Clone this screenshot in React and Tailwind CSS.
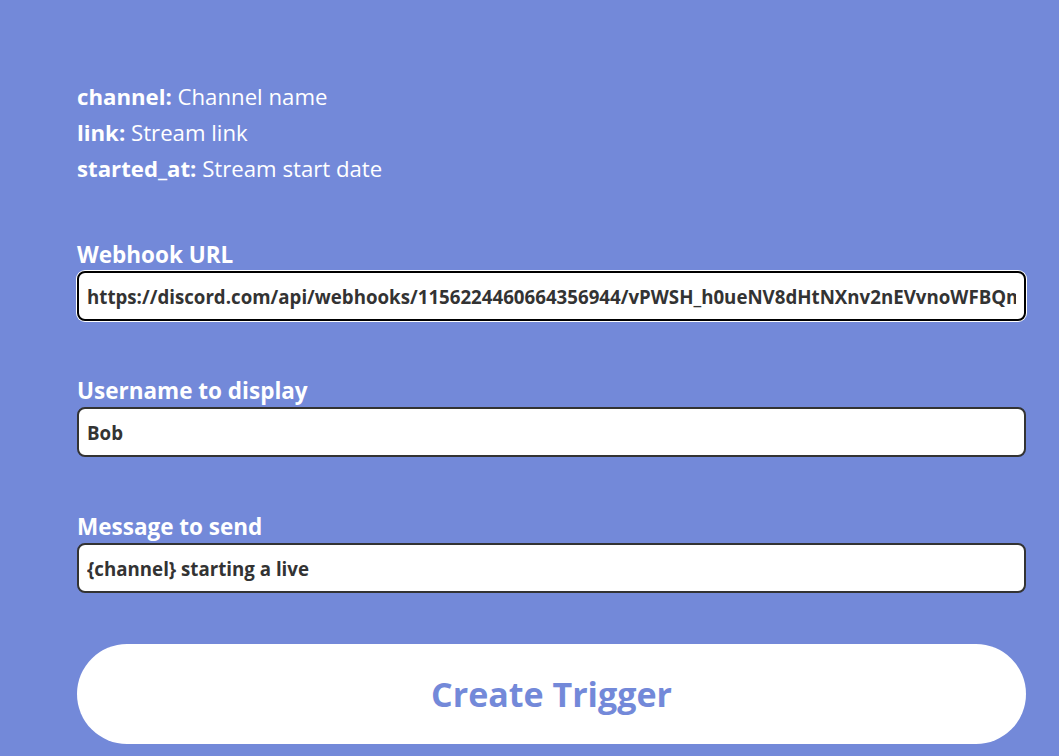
import { useState } from 'react'

function Field({ label, value, focused, mt }) {
  const [val, setVal] = useState(value)
  return (
    <div className={`flex flex-col ${mt}`}>
      <label className="text-[22.5px] leading-[30px] font-bold text-white">{label}</label>
      <input
        type="text"
        value={val}
        onChange={(e) => setVal(e.target.value)}
        className={`mt-px h-[50px] w-full rounded-lg bg-white px-2 text-[18.7px] font-bold text-[#333] outline-none border-2 ${
          focused ? 'border-black ring-1 ring-white' : 'border-[#333]'
        }`}
      />
    </div>
  )
}

export default function App() {
  return (
    <div className="min-h-[756px] bg-[#7389d9] font-['Open_Sans','Noto_Sans',sans-serif] overflow-hidden">
      <main className="pl-[77px] pr-[33px] pt-[79px]">
        {/* Variables */}
        <div className="text-[22.2px] leading-9 text-white">
          <p><span className="font-bold">channel:</span> Channel name</p>
          <p><span className="font-bold">link:</span> Stream link</p>
          <p><span className="font-bold">started_at:</span> Stream start date</p>
        </div>

        <Field
          label="Webhook URL"
          value="https://discord.com/api/webhooks/1156224460664356944/vPWSH_h0ueNV8dHtNXnv2nEVvnoWFBQmK7sPzR4tXcYd9gLh2JwAe"
          focused
          mt="mt-[53px]"
        />
        <Field label="Username to display" value="Bob" mt="mt-[55px]" />
        <Field label="Message to send" value="{channel} starting a live" mt="mt-[55px]" />

        <button
          type="button"
          className="mt-[51px] h-[100px] w-full rounded-full bg-white text-[34px] font-bold text-[#7389d9]"
        >
          Create Trigger
        </button>
      </main>
    </div>
  )
}
